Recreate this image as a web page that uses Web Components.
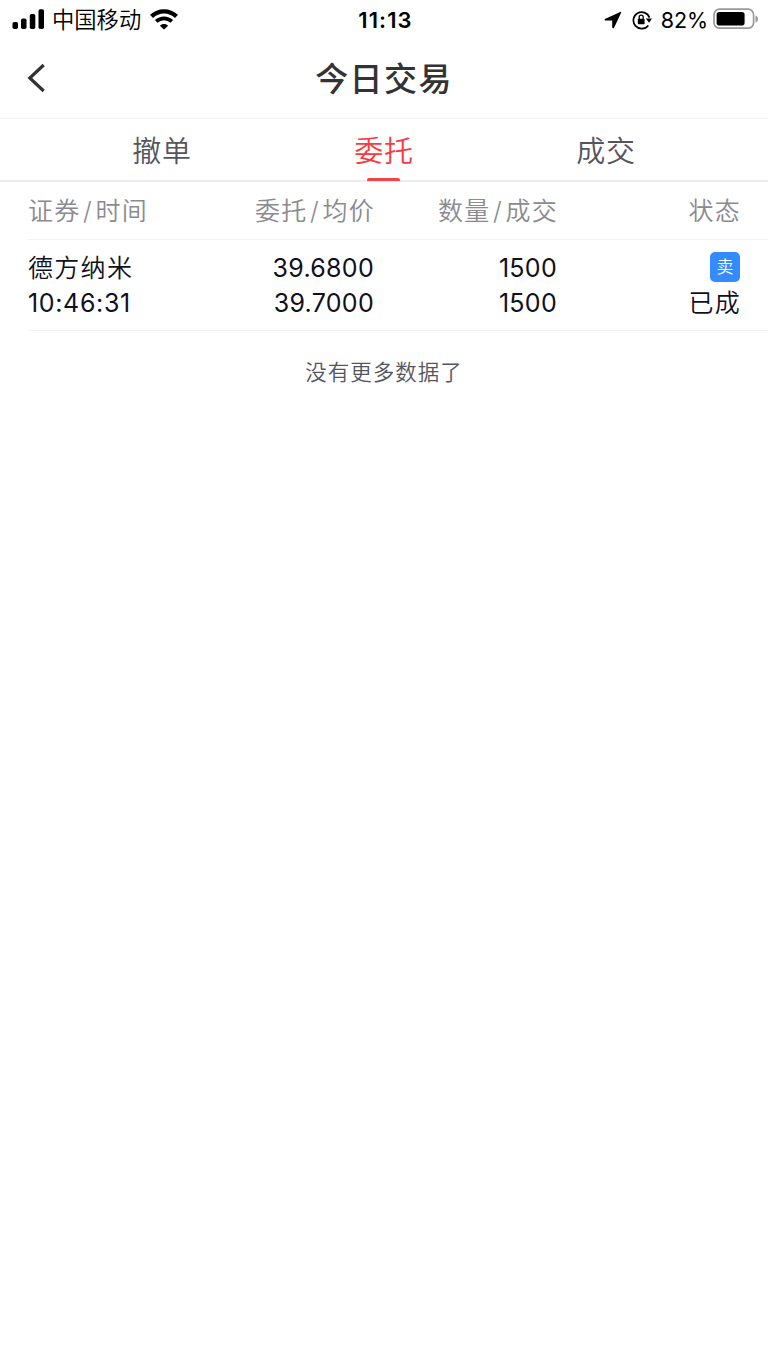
<!DOCTYPE html>
<html lang="zh-CN">
<head>
<meta charset="utf-8">
<meta name="viewport" content="width=device-width">
<title>今日交易</title>
<style>
  body {
    margin: 0;
    min-height: 100vh;
    background: #fff;
    color: #10101c;
    font-family: Inter, "Noto Sans CJK SC", sans-serif;
  }
</style>
</head>
<body>
<trade-page></trade-page>

<script>
class StatusBar extends HTMLElement {
  constructor() {
    super();
    this.attachShadow({ mode: "open" });
  }

  connectedCallback() {
    this.shadowRoot.innerHTML = `
      <style>
        :host {
          display: grid;
          grid-template-columns: 1fr auto 1fr;
          align-items: center;
          height: 40px;
          padding: 0 9px 0 12px;
          box-sizing: border-box;
          color: #000;
          font-size: 22px;
          line-height: 40px;
        }
        .side { display: flex; align-items: center; height: 40px; }
        .right { justify-content: flex-end; }
        svg { display: block; flex: none; }
        .bars, .wifi { margin-bottom: 2px; }
        .carrier { margin: 0 9px 0 8px; font-size: 22.3px; font-weight: 350; }
        .time { font-weight: 600; letter-spacing: 1.1px; }
        .lock { margin-left: 10px; }
        .percent { margin: 0 5px 0 9px; font-size: 21.5px; letter-spacing: -0.1px; }
        .battery { margin-bottom: 2px; }
      </style>
      <div class="side">
        <svg class="bars" width="32" height="20" viewBox="0 0 32 20">
          <rect x="0.5" y="13" width="5.5" height="7" rx="1.7"/>
          <rect x="9" y="9.5" width="5.5" height="10.5" rx="1.7"/>
          <rect x="17.8" y="5" width="5.5" height="15" rx="1.7"/>
          <rect x="26.5" y="0.3" width="5.5" height="19.7" rx="1.7"/>
        </svg>
        <span class="carrier">中国移动</span>
        <svg class="wifi" width="28" height="21" viewBox="0 0 28 21">
          <path d="M1.5 7.4C8.6 .6 19.4 .6 26.5 7.4" fill="none" stroke="#000" stroke-width="4.3"/>
          <path d="M6.2 12.4C10.8 8.3 17.2 8.3 21.8 12.4" fill="none" stroke="#000" stroke-width="3.9"/>
          <path d="M14 20.6L9.9 16.8C12 14.4 16 14.4 18.1 16.8Z"/>
        </svg>
      </div>
      <div class="time">11:13</div>
      <div class="side right">
        <svg width="18" height="18" viewBox="0 0 18 18">
          <path d="M16.3 .9 1.4 7.7C.2 8.3.3 9.6 1.7 9.6H8.2V16.1C8.2 17.6 9.6 17.8 10.2 16.4L17.1 1.7C17.4.9 17 .6 16.3.9Z"/>
        </svg>
        <svg class="lock" width="20" height="20" viewBox="0 0 20 20">
          <path d="M16.3 15.4A8.3 8.3 0 1 1 17.5 7.6" fill="none" stroke="#000" stroke-width="1.7"/>
          <path d="M13.8 8.5H20L17.1 12.7Z"/>
          <rect x="5.8" y="8.7" width="6.8" height="5.6" rx=".8"/>
          <path d="M7.2 9V7.2a2 2 0 0 1 4 0V9" fill="none" stroke="#000" stroke-width="1.3"/>
        </svg>
        <span class="percent">82%</span>
        <svg class="battery" width="46" height="22" viewBox="0 0 46 22">
          <rect x="1" y="1.2" width="39.6" height="19" rx="5.5" fill="none" stroke="#999" stroke-width="1.7"/>
          <rect x="3.6" y="4" width="28" height="13.5" rx="2.8"/>
          <path d="M42.5 7.5C45.9 8.8 45.9 13.3 42.5 14.6Z" fill="#999"/>
        </svg>
      </div>
    `;
  }
}

class NavBar extends HTMLElement {
  constructor() {
    super();
    this.attachShadow({ mode: "open" });
  }

  connectedCallback() {
    this.shadowRoot.innerHTML = `
      <style>
        :host {
          display: grid;
          grid-template-columns: 60px 1fr 60px;
          align-items: center;
          height: 79px;
          box-sizing: border-box;
          border-bottom: 1px solid #f0f0f2;
          color: #333;
        }
        svg { display: block; margin: 0 0 2px 26px; }
        .title {
          text-align: center;
          font-size: 33px;
          font-weight: 500;
          line-height: 78px;
          letter-spacing: 1.4px;
        }
      </style>
      <svg width="22" height="30" viewBox="0 0 22 30">
        <path d="M17.7 2 3.8 15 17.7 28" fill="none" stroke="#333" stroke-width="3.2"/>
      </svg>
      <div class="title"><slot></slot></div>
    `;
  }
}

class TabItem extends HTMLElement {
  constructor() {
    super();
    this.attachShadow({ mode: "open" });
  }

  connectedCallback() {
    this.shadowRoot.innerHTML = `
      <style>
        :host {
          display: flex;
          flex-direction: column;
          align-items: center;
          justify-content: space-between;
          height: 62px;
          color: #555560;
          font-size: 29px;
          font-weight: 350;
          line-height: 66px;
          letter-spacing: 0.8px;
        }
        .label { height: 59px; }
        .line { width: 33px; height: 3px; margin-right: 1px; border-radius: 2px 2px 0 0; }
        :host([active]) { color: #f93a3e; }
        :host([active]) .line { background: #f04448; }
      </style>
      <span class="label"><slot></slot></span>
      <span class="line"></span>
    `;
  }
}

class TabBar extends HTMLElement {
  constructor() {
    super();
    this.attachShadow({ mode: "open" });
  }

  connectedCallback() {
    this.shadowRoot.innerHTML = `
      <style>
        :host {
          display: grid;
          grid-template-columns: repeat(3, 222px);
          justify-content: center;
          height: 63px;
          box-sizing: border-box;
          border-bottom: 2px solid #ededee;
        }
      </style>
      <slot></slot>
    `;
  }
}

class TradeRow extends HTMLElement {
  constructor() {
    super();
    this.attachShadow({ mode: "open" });
  }

  connectedCallback() {
    this.shadowRoot.innerHTML = `
      <style>
        :host {
          display: grid;
          grid-template-columns: 164px 182px 183px 183px;
          margin-left: 28px;
          box-sizing: border-box;
          border-bottom: 1px solid #f2f2f4;
          height: 91px;
          padding-top: 11px;
          font-size: 25px;
          line-height: 35px;
        }
        :host([head]) {
          height: 58px;
          padding-top: 0;
          color: #8a8a90;
          line-height: 58px;
        }
      </style>
      <slot></slot>
    `;
  }
}

class TradeCell extends HTMLElement {
  constructor() {
    super();
    this.attachShadow({ mode: "open" });
  }

  connectedCallback() {
    this.shadowRoot.innerHTML = `
      <style>
        :host {
          display: flex;
          flex-direction: column;
          align-items: flex-end;
          white-space: nowrap;
          font-weight: 350;
          letter-spacing: 1.3px;
          margin-right: -1px;
        }
        :host(:first-child) { align-items: flex-start; }
        :host([num]) { font-weight: 400; letter-spacing: 0.3px; margin-right: 0; }
        ::slotted(.num) { font-weight: 400; letter-spacing: 0.65px; }
      </style>
      <slot></slot>
    `;
  }
}

// Column heading made of two labels with a slash between them
class HeadPair extends HTMLElement {
  constructor() {
    super();
    this.attachShadow({ mode: "open" });
  }

  connectedCallback() {
    this.shadowRoot.innerHTML = `
      <style>
        :host { display: block; }
        i { margin: 0 2.4px; font-style: normal; }
      </style>
      ${this.getAttribute("first")}<i>/</i>${this.getAttribute("second")}
    `;
  }
}

class SideTag extends HTMLElement {
  constructor() {
    super();
    this.attachShadow({ mode: "open" });
  }

  connectedCallback() {
    this.shadowRoot.innerHTML = `
      <style>
        :host {
          display: block;
          width: 30px;
          height: 30px;
          margin: 1px 1px 4px 0;
          border-radius: 5px;
          background: #348aff;
          color: #fff;
          font-size: 17px;
          line-height: 31px;
          letter-spacing: 0;
          text-align: center;
        }
      </style>
      <slot></slot>
    `;
  }
}

class TradePage extends HTMLElement {
  constructor() {
    super();
    this.attachShadow({ mode: "open" });
  }

  connectedCallback() {
    this.shadowRoot.innerHTML = `
      <style>
        :host { display: block; }
        .end {
          margin: 24px 0 0;
          color: #555560;
          font-size: 21.5px;
          font-weight: 350;
          line-height: 34px;
          letter-spacing: 1px;
          text-align: center;
        }
      </style>
      <status-bar></status-bar>
      <nav-bar>今日交易</nav-bar>
      <tab-bar>
        <tab-item>撤单</tab-item>
        <tab-item active>委托</tab-item>
        <tab-item>成交</tab-item>
      </tab-bar>
      <trade-row head>
        <trade-cell><head-pair first="证券" second="时间"></head-pair></trade-cell>
        <trade-cell><head-pair first="委托" second="均价"></head-pair></trade-cell>
        <trade-cell><head-pair first="数量" second="成交"></head-pair></trade-cell>
        <trade-cell>状态</trade-cell>
      </trade-row>
      <trade-row>
        <trade-cell><span>德方纳米</span><span class="num">10:46:31</span></trade-cell>
        <trade-cell num><span>39.6800</span><span>39.7000</span></trade-cell>
        <trade-cell num><span>1500</span><span>1500</span></trade-cell>
        <trade-cell><side-tag>卖</side-tag><span>已成</span></trade-cell>
      </trade-row>
      <p class="end">没有更多数据了</p>
    `;
  }
}

customElements.define("status-bar", StatusBar);
customElements.define("nav-bar", NavBar);
customElements.define("tab-item", TabItem);
customElements.define("tab-bar", TabBar);
customElements.define("trade-row", TradeRow);
customElements.define("trade-cell", TradeCell);
customElements.define("head-pair", HeadPair);
customElements.define("side-tag", SideTag);
customElements.define("trade-page", TradePage);
</script>
</body>
</html>
